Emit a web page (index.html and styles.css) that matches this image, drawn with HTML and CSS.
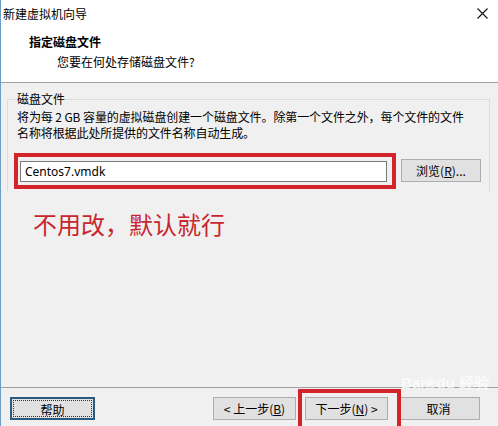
FILE: index.html
```html
<!DOCTYPE html>
<html lang="zh-CN">
<head>
    <meta charset="UTF-8">
    <title>新建虚拟机向导</title>
    <link rel="stylesheet" href="styles.css">
</head>
<body>
    <div class="window">
        <div class="titlebar">
            <span class="title-text">新建虚拟机向导</span>
            <svg class="close-icon" width="11" height="11" viewBox="0 0 11 11">
                <path d="M0.5 0.5 L10.5 10.5 M10.5 0.5 L0.5 10.5" stroke="#111" stroke-width="1.1" fill="none"/>
            </svg>
        </div>
        <div class="header">
            <div class="header-title">指定磁盘文件</div>
            <div class="header-sub">您要在何处存储磁盘文件?</div>
        </div>
        <div class="main">
            <fieldset class="group">
                <legend>磁盘文件</legend>
                <p class="desc">将为每 2 GB 容量的虚拟磁盘创建一个磁盘文件。除第一个文件之外，每个文件的文件<br>名称将根据此处所提供的文件名称自动生成。</p>
                <div class="file-row">
                    <div class="red-box">
                        <input type="text" class="file-input" value="Centos7.vmdk">
                    </div>
                    <button class="btn browse-btn">浏览(<u>R</u>)...</button>
                </div>
            </fieldset>
            <div class="note">不用改，默认就行</div>
        </div>
        <div class="footer">
            <button class="btn help-btn"><span class="focus">帮助</span></button>
            <div class="nav">
                <button class="btn">&lt; 上一步(<u>B</u>)</button>
                <div class="mark-wrap">
                    <button class="btn">下一步(<u>N</u>) &gt;</button>
                    <span class="mark"></span>
                </div>
                <button class="btn">取消</button>
            </div>
            <div class="watermark">Bai<span class="paw">❀</span>du 经验</div>
        </div>
    </div>
</body>
</html>
```

FILE: styles.css
```css
* {
    box-sizing: border-box;
}

body {
    margin: 0;
    padding: 0;
    background-color: #f0f0f0;
    font-family: "Microsoft YaHei", "Noto Sans CJK SC", "Noto Sans", sans-serif;
    font-size: 12px;
    color: #000;
}

.window {
    width: 498px;
    height: 426px;
    display: flex;
    flex-direction: column;
    border-left: 1px solid #6d9cc4;
    overflow: hidden;
}

.titlebar {
    height: 26px;
    display: flex;
    align-items: center;
    justify-content: space-between;
    padding: 0 10px 0 2px;
    background-color: #fff;
}

.close-icon {
    margin-top: 1px;
}

.header {
    height: 57px;
    background-color: #fff;
    border-bottom: 1px solid #a0a0a0;
    padding-top: 7px;
}

.header-title {
    font-weight: bold;
    padding-left: 28px;
    line-height: 18px;
}

.header-sub {
    padding-left: 56px;
    line-height: 18px;
    margin-top: 2px;
}

.main {
    flex: 1;
    padding: 0 8px 0 6px;
}

.group {
    margin: 8px 0 0 0;
    padding: 0 6px 0 6px;
    border: 1px solid #dcdcdc;
    border-bottom: none;
    height: 100px;
}

.group legend {
    margin-left: 2px;
    padding: 0 1px;
    line-height: 16px;
}

.desc {
    margin: 2px 0 0 3px;
    line-height: 16px;
    letter-spacing: -0.1px;
    white-space: nowrap;
}

.file-row {
    display: flex;
    align-items: center;
    gap: 5px;
    margin-top: 12px;
}

.red-box {
    width: 382px;
    border: 4px solid #d3242c;
    padding: 4px 5px 3px 2px;
}

.file-input {
    display: block;
    width: 100%;
    height: 21px;
    border: 1px solid #7a7a7a;
    padding: 0 4px;
    font-family: "Segoe UI", "Noto Sans", "Noto Sans CJK SC", sans-serif;
    font-size: 12px;
    background-color: #fff;
    outline: none;
}

.btn {
    height: 23px;
    width: 83px;
    background-color: #e1e1e1;
    border: 1px solid #adadad;
    font-family: "Microsoft YaHei", "Noto Sans CJK SC", "Noto Sans", sans-serif;
    font-size: 12px;
    color: #000;
    padding: 0;
}

.browse-btn {
    width: 80px;
    margin-top: -2px;
}

.note {
    margin: 17px 0 0 26px;
    font-size: 24px;
    line-height: 32px;
    color: #c8262f;
}

.footer {
    position: relative;
    height: 39px;
    border-top: 1px solid #a0a0a0;
    display: flex;
    justify-content: space-between;
    padding: 9px 18px 0 9px;
}

.help-btn {
    width: 85px;
    border: 2px solid #2a5a80;
    padding: 1px;
}

.help-btn .focus {
    display: block;
    height: 100%;
    line-height: 17px;
    border: 1px dotted #333;
}

.nav {
    display: flex;
    gap: 9px;
}

.mark-wrap {
    position: relative;
}

.mark {
    position: absolute;
    top: -8px;
    left: -7px;
    right: -13px;
    bottom: -4px;
    border: 4px solid #d3242c;
    pointer-events: none;
}

.watermark {
    position: absolute;
    left: 400px;
    top: -14px;
    white-space: nowrap;
    font-family: "Liberation Sans", sans-serif;
    font-size: 15px;
    font-weight: bold;
    color: rgba(255, 255, 255, 0.75);
    line-height: 18px;
    pointer-events: none;
}

.watermark .paw {
    font-size: 12px;
}
```
